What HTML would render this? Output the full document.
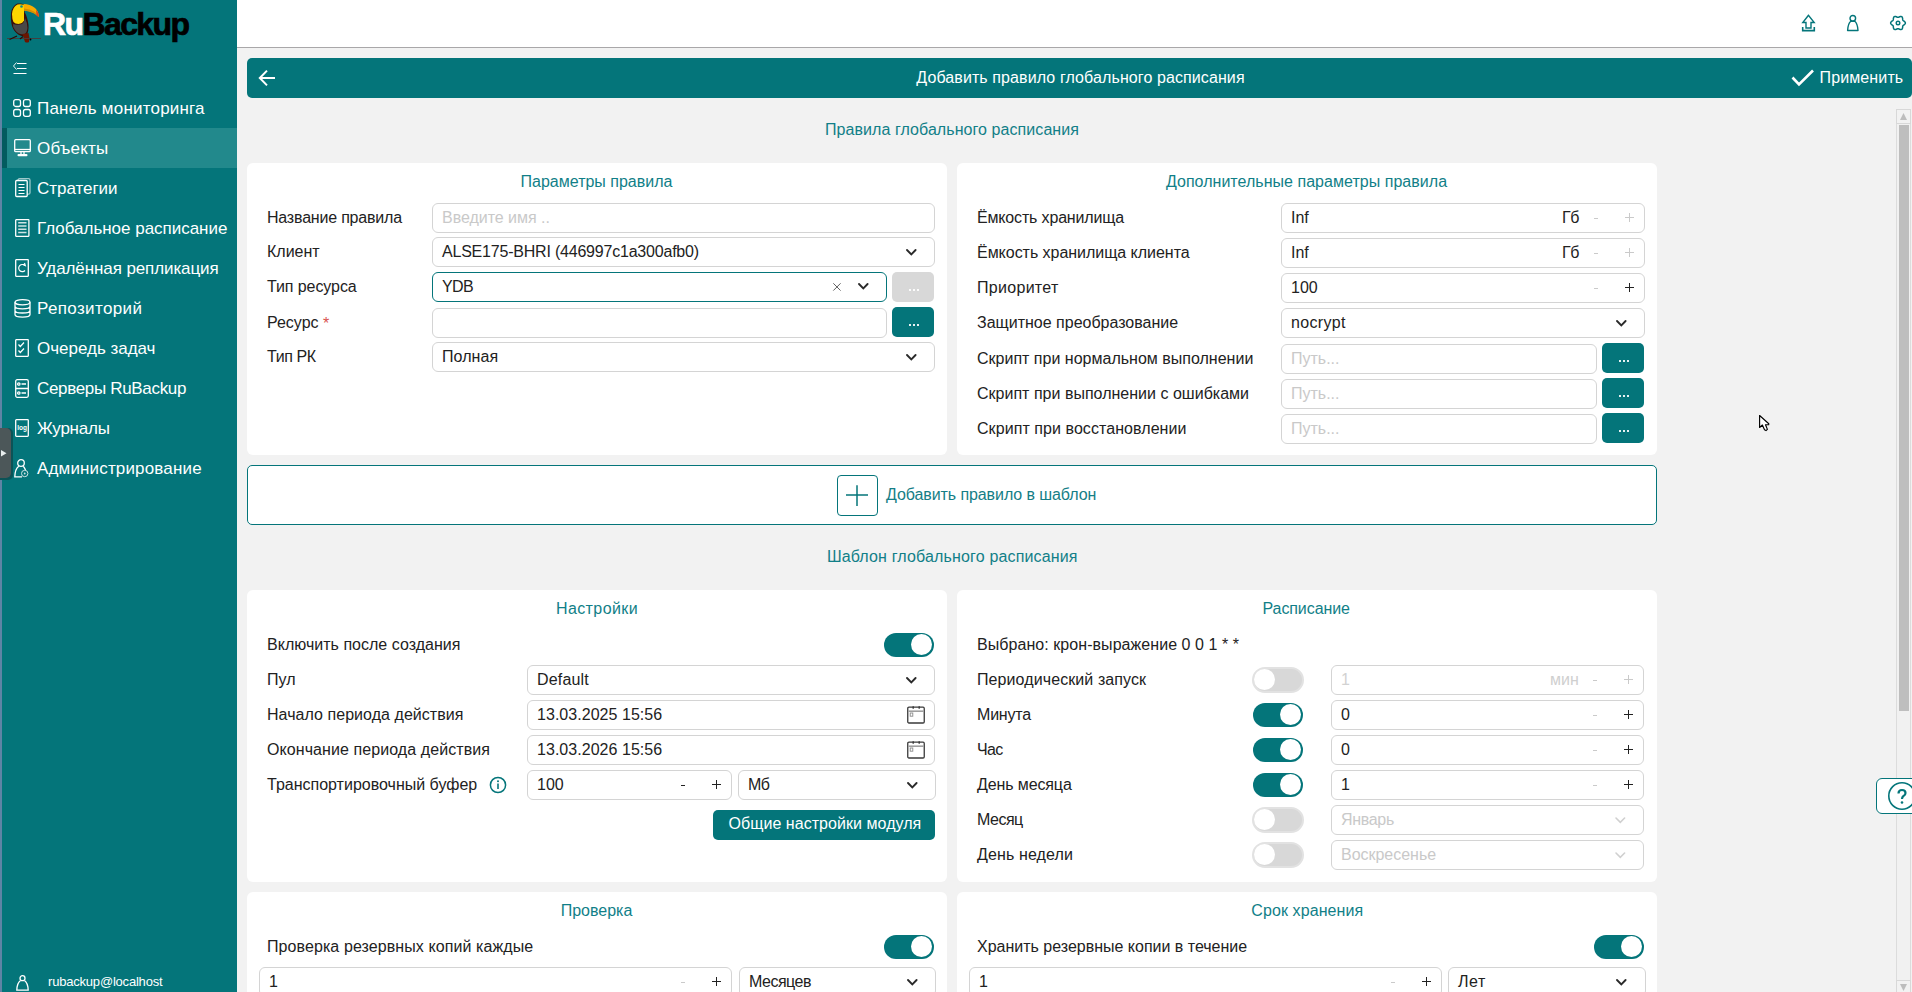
<!DOCTYPE html>
<html><head><meta charset="utf-8">
<style>
*{box-sizing:border-box;margin:0;padding:0}
html,body{width:1912px;height:992px;overflow:hidden;background:#f2f2f2;font-family:"Liberation Sans",sans-serif;color:#222}
.a{position:absolute;display:block}
svg.a{overflow:visible}
.lbl{position:absolute;font-size:16px;color:#222;white-space:nowrap;line-height:20px}
.ttl{position:absolute;font-size:16px;color:#117f88;white-space:nowrap;line-height:20px;text-align:center}
.card{position:absolute;background:#fff;border-radius:6px}
.inp{position:absolute;border:1px solid #d4d4d4;border-radius:6px;background:#fff}
.btn{position:absolute;border-radius:5px;background:#04757a}
.tog{position:absolute;width:50px;height:24px;border-radius:12px;background:#04757a}
.tog::after{content:"";position:absolute;top:1.2px;left:27.2px;width:21px;height:21px;border-radius:11px;background:#fff}
.tog.off{background:#d8d8d8;border:2px solid #e2e2e2;width:52px;height:26px;border-radius:13px}
.tog.off::after{left:0.4px;top:0px;width:21px;height:21px;border-radius:11px}
</style></head><body>
<div class="a" style="left:0;top:0;width:2px;height:992px;background:#5f84a5"></div>
<div class="a" style="left:2px;top:0;width:235px;height:992px;background:#04757a"></div>
<div class="a" style="left:237px;top:0;width:1675px;height:47px;background:#fff"></div>
<div class="a" style="left:237px;top:47px;width:1675px;height:1px;background:#a9a7a9"></div>
<svg class="a" style="left:0px;top:0px" width="44" height="46" viewBox="0 0 44 46">
<path d="M17.5 3.5 Q12 6 11 13 Q10.5 21 12 26 Q14 32 19 35 Q23 37 26 36 Q29 32 28.5 25 Q27.5 17 24.5 12 L24 4.5 Q21 3 17.5 3.5 Z" fill="#3a0d08"/>
<path d="M17.5 4.5 Q12.5 7 12 14 Q12 19 13.5 22 Q15 24 18.5 24 Q22.5 23.5 24 20.5 L24 5 Q21 3.8 17.5 4.5 Z" fill="#fed600"/>
<path d="M13 24 Q17 25.5 22 24 Q24.5 22 25 18 Q27.5 23 27.5 28 Q27 33 24 34.5 Q18 34.5 15 30 Q12.5 27 13 24 Z" fill="#484848"/>
<path d="M23.5 4 Q30 4.2 35 8 Q38.5 11 39 17 Q37 14.5 33.5 12.8 Q29 10.8 24 10.5 Z" fill="#f7ab00"/>
<path d="M24 8.5 Q30 9 34 11.5 Q36.5 13 38 15.5 L38.5 17 Q36 14.5 33 13 Q29 11 24 10.5 Z" fill="#d58f00"/>
<path d="M36 9.5 Q38.7 12 39 17 L36.5 15.5 Z" fill="#e0401c"/>
<path d="M22.5 34 Q24 39 25 42 Q27 43 29 42 Q30 38 28.5 33 Z" fill="#6b1500"/>
<circle cx="21.5" cy="6.5" r="1.3" fill="#0f8a8a"/>
<path d="M7 38.5 H41" stroke="#4a3a3a" stroke-width="0.9"/>
<path d="M9.5 39.5 L17 36 M20 39 L23 36.5" stroke="#2a0a05" stroke-width="1.2"/>
<circle cx="30.5" cy="39.5" r="0.9" fill="#000"/>
</svg>
<div class="a" style="left:43px;top:4px;font-size:32px;font-weight:bold;letter-spacing:-1.6px;-webkit-text-stroke:0.7px;line-height:40px;white-space:nowrap"><span style="color:#fff;-webkit-text-stroke-color:#fff">Ru</span><span style="color:#000;-webkit-text-stroke-color:#000">Backup</span></div>
<svg class="a" style="left:12px;top:61px" width="16" height="15" viewBox="0 0 16 15">
<path d="M4.5 1.5 L1.5 5 L4.5 8.5" fill="none" stroke="#fff" stroke-width="0.9"/>
<path d="M5 2.5 H14.5 M5 7.5 H14.5 M1.5 12.5 H14.5" stroke="#fff" stroke-width="1"/>
</svg>
<div class="a" style="left:37px;top:89px;height:40px;line-height:40px;font-size:17px;letter-spacing:0.2px;color:#fff;white-space:nowrap">Панель мониторинга</div>
<div class="a" style="left:2px;top:128px;width:235px;height:40px;background:#22898c"></div>
<div class="a" style="left:2px;top:128px;width:5px;height:40px;background:#035b5f"></div>
<div class="a" style="left:37px;top:129px;height:40px;line-height:40px;font-size:17px;letter-spacing:0.167px;color:#fff;white-space:nowrap">Объекты</div>
<div class="a" style="left:37px;top:169px;height:40px;line-height:40px;font-size:17px;letter-spacing:-0.038px;color:#fff;white-space:nowrap">Стратегии</div>
<div class="a" style="left:37px;top:209px;height:40px;line-height:40px;font-size:17px;letter-spacing:-0.02px;color:#fff;white-space:nowrap">Глобальное расписание</div>
<div class="a" style="left:37px;top:249px;height:40px;line-height:40px;font-size:17px;letter-spacing:-0.1px;color:#fff;white-space:nowrap">Удалённая репликация</div>
<div class="a" style="left:37px;top:289px;height:40px;line-height:40px;font-size:17px;letter-spacing:0.36px;color:#fff;white-space:nowrap">Репозиторий</div>
<div class="a" style="left:37px;top:329px;height:40px;line-height:40px;font-size:17px;letter-spacing:-0.017px;color:#fff;white-space:nowrap">Очередь задач</div>
<div class="a" style="left:37px;top:369px;height:40px;line-height:40px;font-size:17px;letter-spacing:-0.327px;color:#fff;white-space:nowrap">Серверы RuBackup</div>
<div class="a" style="left:37px;top:409px;height:40px;line-height:40px;font-size:17px;letter-spacing:-0.217px;color:#fff;white-space:nowrap">Журналы</div>
<div class="a" style="left:37px;top:449px;height:40px;line-height:40px;font-size:17px;letter-spacing:0.156px;color:#fff;white-space:nowrap">Администрирование</div>
<svg class="a" style="left:13px;top:99px" width="18" height="18" viewBox="0 0 18 18"><rect x="0.7" y="0.7" width="6.8" height="6.8" rx="2" fill="none" stroke="#fff" stroke-width="1.3"/><rect x="10.5" y="0.7" width="6.8" height="6.8" rx="2" fill="none" stroke="#fff" stroke-width="1.3"/><rect x="0.7" y="10.5" width="6.8" height="6.8" rx="2" fill="none" stroke="#fff" stroke-width="1.3"/><rect x="10.5" y="10.5" width="6.8" height="6.8" rx="2" fill="none" stroke="#fff" stroke-width="1.3"/></svg>
<svg class="a" style="left:13.5px;top:138.5px" width="17" height="18" viewBox="0 0 17 18"><rect x="0.7" y="0.7" width="15.6" height="12" rx="1" fill="none" stroke="#fff" stroke-width="1.3"/><path d="M0.7 10.5 H16.3" fill="none" stroke="#fff" stroke-width="1.3"/><path d="M7 12.7 V15 M10 12.7 V15" fill="none" stroke="#fff" stroke-width="1.3"/><rect x="3.5" y="15" width="10" height="2.2" rx="1" fill="#fff"/></svg>
<svg class="a" style="left:14.5px;top:178px" width="16" height="19" viewBox="0 0 16 19"><rect x="3" y="0.7" width="12" height="15.5" rx="1.5" fill="none" stroke="#9cc8ca" stroke-width="1.3"/><rect x="0.7" y="2.5" width="11.5" height="16" rx="1" fill="#04757a" stroke="#fff" stroke-width="1.3"/><path d="M3.5 6.5 H9.5 M3.5 9.5 H9.5 M3.5 12.5 H9.5 M3.5 15.5 H9.5" stroke="#fff" stroke-width="1.2"/></svg>
<svg class="a" style="left:14.5px;top:219px" width="15" height="18" viewBox="0 0 15 18"><rect x="0.7" y="0.7" width="13.2" height="16.6" rx="0.5" fill="none" stroke="#fff" stroke-width="1.3"/><path d="M3.2 3.8 H11.5 M3.2 7 H11.5 M3.2 10.2 H11.5 M3.2 13.4 H11.5" stroke="#cfe3e4" stroke-width="1.5"/></svg>
<svg class="a" style="left:15px;top:259px" width="14" height="18" viewBox="0 0 14 18"><rect x="0.7" y="0.7" width="12.6" height="16.6" rx="0.5" fill="none" stroke="#fff" stroke-width="1.3"/><path d="M9.8 6.5 A3.6 3.6 0 1 0 10 11.5" fill="none" stroke="#fff" stroke-width="1.2"/><path d="M8 5.2 L10.3 6.6 L9.5 4" fill="none" stroke="#fff" stroke-width="1.1"/></svg>
<svg class="a" style="left:14px;top:298.5px" width="17" height="19" viewBox="0 0 17 19"><ellipse cx="8.5" cy="3.2" rx="7.5" ry="2.6" fill="none" stroke="#fff" stroke-width="1.3"/><path d="M1 3.2 V15.5 A7.5 2.6 0 0 0 16 15.5 V3.2 M1 7.3 A7.5 2.6 0 0 0 16 7.3 M1 11.4 A7.5 2.6 0 0 0 16 11.4" fill="none" stroke="#fff" stroke-width="1.3"/></svg>
<svg class="a" style="left:15px;top:339px" width="14" height="18" viewBox="0 0 14 18"><rect x="0.7" y="0.7" width="12.6" height="16.6" rx="0.5" fill="none" stroke="#fff" stroke-width="1.3"/><path d="M3.5 5.5 L5.3 7.5 L9 3.5 M3.5 11.5 L5.3 13.5 L9 9.5" fill="none" stroke="#fff" stroke-width="1.2"/></svg>
<svg class="a" style="left:15px;top:378.5px" width="14" height="19" viewBox="0 0 14 19"><rect x="0.7" y="0.7" width="12.6" height="17.6" rx="1.5" fill="none" stroke="#fff" stroke-width="1.3"/><path d="M0.7 9.5 H13.3 M6.5 5 H11 M6.5 14 H11" fill="none" stroke="#fff" stroke-width="1.3"/><circle cx="3.8" cy="5" r="1.2" fill="none" stroke="#fff" stroke-width="1.3"/><circle cx="3.8" cy="14" r="1.2" fill="none" stroke="#fff" stroke-width="1.3"/></svg>
<svg class="a" style="left:15px;top:419px" width="14" height="18" viewBox="0 0 14 18"><rect x="0.7" y="0.7" width="12.6" height="16.6" rx="0.8" fill="none" stroke="#fff" stroke-width="1.3"/><text x="7" y="10.5" font-size="6.5" font-family="Liberation Sans" font-weight="bold" fill="#fff" text-anchor="middle">log</text></svg>
<svg class="a" style="left:14px;top:458.5px" width="15" height="19" viewBox="0 0 15 19"><circle cx="7" cy="4" r="3.3" fill="none" stroke="#fff" stroke-width="1.3"/><path d="M4.8 7.2 Q1 10 0.8 17.8 H8" fill="none" stroke="#fff" stroke-width="1.3"/><path d="M9.3 7.2 Q10.5 8.5 11.5 11" fill="none" stroke="#fff" stroke-width="1.3"/><circle cx="10.7" cy="14.5" r="3.2" fill="none" stroke="#cfe3e4" stroke-width="1"/><circle cx="10.7" cy="14.5" r="0.9" fill="#cfe3e4"/></svg>
<div class="a" style="left:0;top:428px;width:13px;height:52px;border-radius:0 5px 5px 0;background:#0b5357"></div>
<div class="a" style="left:0;top:428px;width:11px;height:50px;border-radius:0 5px 5px 0;background:#4c5759"></div>
<svg class="a" style="left:1px;top:450px" width="6" height="7"><path d="M0 0 L5.5 3.3 L0 6.6 Z" fill="#e8eeee"/></svg>
<svg class="a" style="left:16px;top:975px" width="13" height="16" viewBox="0 0 13 16"><circle cx="6.5" cy="3.2" r="2.5" fill="none" stroke="#fff" stroke-width="1.3"/><path d="M4.5 5.5 Q1 8 0.8 15.2 H12.2 Q12 8 8.5 5.5" fill="none" stroke="#fff" stroke-width="1.3"/></svg>
<div class="a" style="left:48px;top:973px;font-size:13px;line-height:18px;color:#fff;white-space:nowrap;letter-spacing:-0.2px">rubackup@localhost</div>
<svg class="a" style="left:1801px;top:14px" width="15" height="18" viewBox="0 0 15 18">
<path d="M7.5 1.3 L1.8 8.5 H5 V14 H10 V8.5 H13.2 Z" fill="none" stroke="#04757a" stroke-width="1.4" stroke-linejoin="miter"/>
<path d="M1.7 13 V16.6 H13.3 V13" fill="none" stroke="#04757a" stroke-width="1.6"/>
</svg>
<svg class="a" style="left:1846px;top:14px" width="14" height="18" viewBox="0 0 14 18">
<circle cx="6.8" cy="4.3" r="2.8" fill="none" stroke="#04757a" stroke-width="1.4"/>
<path d="M4.8 7.3 Q2 9.5 1.6 16.5 H12 Q11.6 9.5 8.8 7.3 Z" fill="none" stroke="#04757a" stroke-width="1.4" stroke-linejoin="round"/>
</svg>
<svg class="a" style="left:1889px;top:13.7px" width="18" height="18" viewBox="0 0 18 18">
<path d="M16.35 9.00 L16.21 9.63 L15.82 10.20 L15.28 10.68 L14.71 11.08 L14.22 11.44 L13.89 11.82 L13.72 12.31 L13.65 12.90 L13.60 13.60 L13.45 14.30 L13.15 14.93 L12.68 15.37 L12.06 15.56 L11.37 15.51 L10.68 15.28 L10.05 14.98 L9.50 14.74 L9.00 14.65 L8.50 14.74 L7.95 14.98 L7.32 15.28 L6.63 15.51 L5.94 15.56 L5.33 15.37 L4.85 14.93 L4.55 14.30 L4.40 13.60 L4.35 12.90 L4.28 12.31 L4.11 11.83 L3.78 11.44 L3.29 11.08 L2.72 10.68 L2.18 10.20 L1.79 9.63 L1.65 9.00 L1.79 8.37 L2.18 7.80 L2.72 7.32 L3.29 6.92 L3.78 6.56 L4.11 6.17 L4.28 5.69 L4.35 5.10 L4.40 4.40 L4.55 3.70 L4.85 3.07 L5.32 2.63 L5.94 2.44 L6.63 2.49 L7.32 2.72 L7.95 3.02 L8.50 3.26 L9.00 3.35 L9.50 3.26 L10.05 3.02 L10.68 2.72 L11.37 2.49 L12.06 2.44 L12.67 2.63 L13.15 3.07 L13.45 3.70 L13.60 4.40 L13.65 5.10 L13.72 5.69 L13.89 6.18 L14.22 6.56 L14.71 6.92 L15.28 7.32 L15.82 7.80 L16.21 8.37 Z" fill="none" stroke="#04757a" stroke-width="1.5" stroke-linejoin="round"/>
<circle cx="9" cy="9" r="1.8" fill="none" stroke="#04757a" stroke-width="1.4"/>
</svg>
<div class="a" style="left:247px;top:58px;width:1665px;height:40px;border-radius:5px;background:#04757a"></div>
<svg class="a" style="left:258px;top:69px" width="19" height="18" viewBox="0 0 19 18"><path d="M17 9 H3 M9 1.6 L1.8 9 L9 16.4" fill="none" stroke="#fff" stroke-width="2"/></svg>
<div class="lbl" style="left:880.5px;top:68px;width:400px;text-align:center;color:#fff;letter-spacing:0.1px">Добавить правило глобального расписания</div>
<svg class="a" style="left:1790px;top:68px" width="26" height="20" viewBox="0 0 26 20"><path d="M2.5 9.5 L9 16.5 L23 2.5" fill="none" stroke="#fff" stroke-width="2.6"/></svg>
<div class="lbl" style="left:1819.5px;top:68.00px;color:#fff;letter-spacing:0.125px;">Применить</div>
<div class="ttl" style="left:752.0px;top:120.00px;width:400px;letter-spacing:0.069px;">Правила глобального расписания</div>
<div class="ttl" style="left:752.3px;top:547.00px;width:400px;letter-spacing:0.157px;">Шаблон глобального расписания</div>
<div class="card" style="left:247px;top:163px;width:700px;height:292px"></div>
<div class="card" style="left:957px;top:163px;width:700px;height:292px"></div>
<div class="card" style="left:247px;top:590px;width:700px;height:292px"></div>
<div class="card" style="left:957px;top:590px;width:700px;height:292px"></div>
<div class="card" style="left:247px;top:892px;width:700px;height:200px"></div>
<div class="card" style="left:957px;top:892px;width:700px;height:200px"></div>
<div class="ttl" style="left:396.5px;top:172.00px;width:400px;">Параметры правила</div>
<div class="ttl" style="left:1106.5px;top:172.00px;width:400px;letter-spacing:0.032px;">Дополнительные параметры правила</div>
<div class="ttl" style="left:397.0px;top:599.00px;width:400px;letter-spacing:0.401px;">Настройки</div>
<div class="ttl" style="left:1106.2px;top:599.00px;width:400px;letter-spacing:-0.088px;">Расписание</div>
<div class="ttl" style="left:396.5px;top:901.00px;width:400px;">Проверка</div>
<div class="ttl" style="left:1107.3px;top:901.00px;width:400px;letter-spacing:0.1px;">Срок хранения</div>
<div class="lbl" style="left:267px;top:208.00px;letter-spacing:-0.2px;">Название правила</div>
<div class="inp" style="left:432px;top:203px;width:503px;height:30px;"></div>
<div class="lbl" style="left:442px;top:208.00px;color:#c9c9c9;letter-spacing:-0.03px;">Введите имя ..</div>
<div class="lbl" style="left:267px;top:242.00px;">Клиент</div>
<div class="inp" style="left:432px;top:237px;width:503px;height:30px;"></div>
<div class="lbl" style="left:442px;top:242.00px;color:#222;letter-spacing:-0.207px;">ALSE175-BHRI (446997c1a300afb0)</div>
<svg class="a" style="left:905.30px;top:247.70px" width="12.6" height="8.3"><path d="M2 2 L6.30 6.30 L10.60 2" fill="none" stroke="#2a2a2a" stroke-width="1.9" stroke-linecap="round" stroke-linejoin="miter"/></svg>
<div class="lbl" style="left:267px;top:277.00px;letter-spacing:-0.08px;">Тип ресурса</div>
<div class="inp" style="left:432px;top:272px;width:455px;height:30px;border-color:#04757a;"></div>
<div class="lbl" style="left:442px;top:277.00px;color:#222;letter-spacing:-0.6px;">YDB</div>
<svg class="a" style="left:832px;top:282px" width="10" height="10" viewBox="0 0 10 10"><path d="M1.3 1.3 L8.6 8.6 M8.6 1.3 L1.3 8.6" stroke="#5a5a5a" stroke-width="0.95"/></svg>
<svg class="a" style="left:857.20px;top:282.45px" width="12.6" height="8.3"><path d="M2 2 L6.30 6.30 L10.60 2" fill="none" stroke="#2a2a2a" stroke-width="1.9" stroke-linecap="round" stroke-linejoin="miter"/></svg>
<div class="btn" style="left:892px;top:272px;width:42px;height:30px;background:#d8d8d8"></div>
<div class="a" style="left:909px;top:289px;width:2px;height:2px;background:#fff;opacity:0.9"></div>
<div class="a" style="left:913px;top:289px;width:2px;height:2px;background:#fff;opacity:0.9"></div>
<div class="a" style="left:917px;top:289px;width:2px;height:2px;background:#fff;opacity:0.9"></div>
<div class="lbl" style="left:267px;top:313.00px;">Ресурс <span style="color:#d9534f;position:relative;top:1px">*</span></div>
<div class="inp" style="left:432px;top:308px;width:455px;height:30px;"></div>
<div class="btn" style="left:892px;top:307px;width:42px;height:30px;background:#04757a"></div>
<div class="a" style="left:909px;top:324px;width:2px;height:2px;background:#fff;opacity:0.9"></div>
<div class="a" style="left:913px;top:324px;width:2px;height:2px;background:#fff;opacity:0.9"></div>
<div class="a" style="left:917px;top:324px;width:2px;height:2px;background:#fff;opacity:0.9"></div>
<div class="lbl" style="left:267px;top:347.00px;letter-spacing:-0.4px;">Тип РК</div>
<div class="inp" style="left:432px;top:342px;width:503px;height:30px;"></div>
<div class="lbl" style="left:442px;top:347.00px;color:#222;letter-spacing:0.08px;">Полная</div>
<svg class="a" style="left:905.30px;top:352.70px" width="12.6" height="8.3"><path d="M2 2 L6.30 6.30 L10.60 2" fill="none" stroke="#2a2a2a" stroke-width="1.9" stroke-linecap="round" stroke-linejoin="miter"/></svg>
<div class="lbl" style="left:977px;top:208.00px;letter-spacing:-0.163px;">Ёмкость хранилища</div>
<div class="lbl" style="left:977px;top:243.00px;letter-spacing:-0.033px;">Ёмкость хранилища клиента</div>
<div class="lbl" style="left:977px;top:278.00px;letter-spacing:0.3px;">Приоритет</div>
<div class="lbl" style="left:977px;top:313.00px;">Защитное преобразование</div>
<div class="lbl" style="left:977px;top:349.00px;letter-spacing:0.006px;">Скрипт при нормальном выполнении</div>
<div class="lbl" style="left:977px;top:384.00px;letter-spacing:0.012px;">Скрипт при выполнении с ошибками</div>
<div class="lbl" style="left:977px;top:419.00px;letter-spacing:0.066px;">Скрипт при восстановлении</div>
<div class="inp" style="left:1281px;top:203px;width:364px;height:30px;"></div>
<div class="lbl" style="left:1291px;top:208.00px;color:#222;">Inf</div>
<div class="lbl" style="left:1562px;top:208.00px;color:#222;letter-spacing:-0.3px;">Гб</div>
<div class="a" style="left:1594px;top:218px;width:4px;height:1px;background:#cacaca"></div>
<div class="a" style="left:1625px;top:217px;width:9px;height:1px;background:#cacaca"></div>
<div class="a" style="left:1629px;top:213px;width:1px;height:9px;background:#cacaca"></div>
<div class="inp" style="left:1281px;top:238px;width:364px;height:30px;"></div>
<div class="lbl" style="left:1291px;top:243.00px;color:#222;">Inf</div>
<div class="lbl" style="left:1562px;top:243.00px;color:#222;letter-spacing:-0.3px;">Гб</div>
<div class="a" style="left:1594px;top:253px;width:4px;height:1px;background:#cacaca"></div>
<div class="a" style="left:1625px;top:252px;width:9px;height:1px;background:#cacaca"></div>
<div class="a" style="left:1629px;top:248px;width:1px;height:9px;background:#cacaca"></div>
<div class="inp" style="left:1281px;top:273px;width:364px;height:30px;"></div>
<div class="lbl" style="left:1291px;top:278.00px;color:#222;">100</div>
<div class="a" style="left:1594px;top:288px;width:4px;height:1px;background:#cacaca"></div>
<div class="a" style="left:1625px;top:287px;width:9px;height:1px;background:#222"></div>
<div class="a" style="left:1629px;top:283px;width:1px;height:9px;background:#222"></div>
<div class="inp" style="left:1281px;top:308px;width:364px;height:30px;"></div>
<div class="lbl" style="left:1291px;top:313.00px;color:#222;letter-spacing:0.333px;">nocrypt</div>
<svg class="a" style="left:1614.90px;top:318.70px" width="12.6" height="8.3"><path d="M2 2 L6.30 6.30 L10.60 2" fill="none" stroke="#2a2a2a" stroke-width="1.9" stroke-linecap="round" stroke-linejoin="miter"/></svg>
<div class="inp" style="left:1281px;top:344px;width:316px;height:30px;"></div>
<div class="lbl" style="left:1291px;top:349.00px;color:#c9c9c9;">Путь...</div>
<div class="btn" style="left:1602px;top:343px;width:42px;height:30px;background:#04757a"></div>
<div class="a" style="left:1619px;top:360px;width:2px;height:2px;background:#fff;opacity:0.9"></div>
<div class="a" style="left:1623px;top:360px;width:2px;height:2px;background:#fff;opacity:0.9"></div>
<div class="a" style="left:1627px;top:360px;width:2px;height:2px;background:#fff;opacity:0.9"></div>
<div class="inp" style="left:1281px;top:379px;width:316px;height:30px;"></div>
<div class="lbl" style="left:1291px;top:384.00px;color:#c9c9c9;">Путь...</div>
<div class="btn" style="left:1602px;top:378px;width:42px;height:30px;background:#04757a"></div>
<div class="a" style="left:1619px;top:395px;width:2px;height:2px;background:#fff;opacity:0.9"></div>
<div class="a" style="left:1623px;top:395px;width:2px;height:2px;background:#fff;opacity:0.9"></div>
<div class="a" style="left:1627px;top:395px;width:2px;height:2px;background:#fff;opacity:0.9"></div>
<div class="inp" style="left:1281px;top:414px;width:316px;height:30px;"></div>
<div class="lbl" style="left:1291px;top:419.00px;color:#c9c9c9;">Путь...</div>
<div class="btn" style="left:1602px;top:413px;width:42px;height:30px;background:#04757a"></div>
<div class="a" style="left:1619px;top:430px;width:2px;height:2px;background:#fff;opacity:0.9"></div>
<div class="a" style="left:1623px;top:430px;width:2px;height:2px;background:#fff;opacity:0.9"></div>
<div class="a" style="left:1627px;top:430px;width:2px;height:2px;background:#fff;opacity:0.9"></div>
<div class="a" style="left:247px;top:465px;width:1410px;height:60px;border:1.5px solid #04757a;border-radius:5px;background:#fff"></div>
<div class="a" style="left:836.5px;top:475px;width:41px;height:41px;border:1.5px solid #04757a;border-radius:4px"></div>
<svg class="a" style="left:845px;top:483px" width="24" height="24" viewBox="0 0 24 24"><path d="M12 2.2 V23 M1 12 H23" stroke="#04757a" stroke-width="1.5"/></svg>
<div class="lbl" style="left:886px;top:485.00px;color:#157e86;letter-spacing:-0.083px;">Добавить правило в шаблон</div>
<div class="lbl" style="left:267px;top:635.00px;letter-spacing:0.018px;">Включить после создания</div>
<div class="tog" style="left:884px;top:633px"></div>
<div class="lbl" style="left:267px;top:670.00px;letter-spacing:0.1px;">Пул</div>
<div class="inp" style="left:527px;top:665px;width:408px;height:30px;"></div>
<div class="lbl" style="left:537px;top:670.00px;color:#222;letter-spacing:0.167px;">Default</div>
<svg class="a" style="left:905.30px;top:675.70px" width="12.6" height="8.3"><path d="M2 2 L6.30 6.30 L10.60 2" fill="none" stroke="#2a2a2a" stroke-width="1.9" stroke-linecap="round" stroke-linejoin="miter"/></svg>
<div class="lbl" style="left:267px;top:705.00px;letter-spacing:0.046px;">Начало периода действия</div>
<div class="inp" style="left:527px;top:700px;width:408px;height:30px;"></div>
<div class="lbl" style="left:537px;top:705.00px;color:#222;letter-spacing:0.04px;">13.03.2025 15:56</div>
<svg class="a" style="left:907px;top:706px" width="18" height="18" viewBox="0 0 18 18"><rect x="0.75" y="1.2" width="16.5" height="15.8" rx="1.2" fill="none" stroke="#3a3a3a" stroke-width="1.3"/><path d="M1.3 5.2 H16.7" stroke="#a0a0a0" stroke-width="1.6"/><path d="M6.2 0.2 V2.8 M12.2 0.2 V2.8" stroke="#333" stroke-width="1.3"/><rect x="3.2" y="7" width="2.6" height="3.2" fill="none" stroke="#8a8a8a" stroke-width="0.9"/></svg>
<div class="lbl" style="left:267px;top:740.00px;letter-spacing:0.08px;">Окончание периода действия</div>
<div class="inp" style="left:527px;top:735px;width:408px;height:30px;"></div>
<div class="lbl" style="left:537px;top:740.00px;color:#222;letter-spacing:0.04px;">13.03.2026 15:56</div>
<svg class="a" style="left:907px;top:741px" width="18" height="18" viewBox="0 0 18 18"><rect x="0.75" y="1.2" width="16.5" height="15.8" rx="1.2" fill="none" stroke="#3a3a3a" stroke-width="1.3"/><path d="M1.3 5.2 H16.7" stroke="#a0a0a0" stroke-width="1.6"/><path d="M6.2 0.2 V2.8 M12.2 0.2 V2.8" stroke="#333" stroke-width="1.3"/><rect x="3.2" y="7" width="2.6" height="3.2" fill="none" stroke="#8a8a8a" stroke-width="0.9"/></svg>
<div class="lbl" style="left:267px;top:775.00px;">Транспортировочный буфер</div>
<svg class="a" style="left:489px;top:776px" width="18" height="18" viewBox="0 0 18 18"><circle cx="9" cy="9" r="7.6" fill="none" stroke="#04757a" stroke-width="1.5"/><circle cx="9" cy="5.3" r="1" fill="#04757a"/><path d="M9 7.5 V13" stroke="#04757a" stroke-width="1.6"/></svg>
<div class="inp" style="left:527px;top:770px;width:205px;height:30px;"></div>
<div class="lbl" style="left:537px;top:775.00px;color:#222;">100</div>
<div class="a" style="left:681px;top:785px;width:4px;height:1px;background:#222"></div>
<div class="a" style="left:712px;top:784px;width:9px;height:1px;background:#222"></div>
<div class="a" style="left:716px;top:780px;width:1px;height:9px;background:#222"></div>
<div class="inp" style="left:738px;top:770px;width:198px;height:30px;"></div>
<div class="lbl" style="left:748px;top:775.00px;color:#222;letter-spacing:-0.6px;">Мб</div>
<svg class="a" style="left:905.90px;top:780.70px" width="12.6" height="8.3"><path d="M2 2 L6.30 6.30 L10.60 2" fill="none" stroke="#2a2a2a" stroke-width="1.9" stroke-linecap="round" stroke-linejoin="miter"/></svg>
<div class="btn" style="left:713px;top:810px;width:222px;height:30px"></div>
<div class="lbl" style="left:728.5px;top:814.00px;color:#fff;letter-spacing:0.048px;">Общие настройки модуля</div>
<div class="lbl" style="left:977px;top:635.00px;letter-spacing:0.057px;">Выбрано: крон-выражение 0 0 1 * *</div>
<div class="lbl" style="left:977px;top:670.00px;letter-spacing:0.094px;">Периодический запуск</div>
<div class="tog off" style="left:1252px;top:667px"></div>
<div class="inp" style="left:1331px;top:665px;width:313px;height:30px;"></div>
<div class="lbl" style="left:977px;top:705.00px;letter-spacing:-0.2px;">Минута</div>
<div class="tog" style="left:1253px;top:703px"></div>
<div class="inp" style="left:1331px;top:700px;width:313px;height:30px;"></div>
<div class="lbl" style="left:977px;top:740.00px;letter-spacing:-0.6px;">Час</div>
<div class="tog" style="left:1253px;top:738px"></div>
<div class="inp" style="left:1331px;top:735px;width:313px;height:30px;"></div>
<div class="lbl" style="left:977px;top:775.00px;letter-spacing:-0.12px;">День месяца</div>
<div class="tog" style="left:1253px;top:773px"></div>
<div class="inp" style="left:1331px;top:770px;width:313px;height:30px;"></div>
<div class="lbl" style="left:977px;top:810.00px;letter-spacing:-0.5px;">Месяц</div>
<div class="tog off" style="left:1252px;top:807px"></div>
<div class="inp" style="left:1331px;top:805px;width:313px;height:30px;"></div>
<div class="lbl" style="left:977px;top:845.00px;letter-spacing:0.12px;">День недели</div>
<div class="tog off" style="left:1252px;top:842px"></div>
<div class="inp" style="left:1331px;top:840px;width:313px;height:30px;"></div>
<div class="lbl" style="left:1341px;top:670.00px;color:#d2d2d2;">1</div>
<div class="lbl" style="left:1550px;top:670.00px;color:#cfcfcf;">мин</div>
<div class="a" style="left:1593px;top:680px;width:4px;height:1px;background:#cacaca"></div>
<div class="a" style="left:1624px;top:679px;width:9px;height:1px;background:#cacaca"></div>
<div class="a" style="left:1628px;top:675px;width:1px;height:9px;background:#cacaca"></div>
<div class="lbl" style="left:1341px;top:705.00px;color:#222;">0</div>
<div class="a" style="left:1593px;top:715px;width:4px;height:1px;background:#cacaca"></div>
<div class="a" style="left:1624px;top:714px;width:9px;height:1px;background:#222"></div>
<div class="a" style="left:1628px;top:710px;width:1px;height:9px;background:#222"></div>
<div class="lbl" style="left:1341px;top:740.00px;color:#222;">0</div>
<div class="a" style="left:1593px;top:750px;width:4px;height:1px;background:#cacaca"></div>
<div class="a" style="left:1624px;top:749px;width:9px;height:1px;background:#222"></div>
<div class="a" style="left:1628px;top:745px;width:1px;height:9px;background:#222"></div>
<div class="lbl" style="left:1341px;top:775.00px;color:#222;">1</div>
<div class="a" style="left:1593px;top:785px;width:4px;height:1px;background:#cacaca"></div>
<div class="a" style="left:1624px;top:784px;width:9px;height:1px;background:#222"></div>
<div class="a" style="left:1628px;top:780px;width:1px;height:9px;background:#222"></div>
<div class="lbl" style="left:1341px;top:810.00px;color:#c9c9c9;letter-spacing:-0.32px;">Январь</div>
<svg class="a" style="left:1614.20px;top:815.70px" width="12.6" height="8.3"><path d="M2 2 L6.30 6.30 L10.60 2" fill="none" stroke="#d0d0d0" stroke-width="1.6" stroke-linecap="round" stroke-linejoin="miter"/></svg>
<div class="lbl" style="left:1341px;top:845.00px;color:#c9c9c9;letter-spacing:-0.02px;">Воскресенье</div>
<svg class="a" style="left:1614.20px;top:850.70px" width="12.6" height="8.3"><path d="M2 2 L6.30 6.30 L10.60 2" fill="none" stroke="#d0d0d0" stroke-width="1.6" stroke-linecap="round" stroke-linejoin="miter"/></svg>
<div class="lbl" style="left:267px;top:937.00px;letter-spacing:0.087px;">Проверка резервных копий каждые</div>
<div class="tog" style="left:884px;top:935px"></div>
<div class="inp" style="left:259px;top:967px;width:473px;height:30px;"></div>
<div class="lbl" style="left:269px;top:972.00px;color:#222;">1</div>
<div class="a" style="left:681px;top:982px;width:4px;height:1px;background:#cacaca"></div>
<div class="a" style="left:712px;top:981px;width:9px;height:1px;background:#222"></div>
<div class="a" style="left:716px;top:977px;width:1px;height:9px;background:#222"></div>
<div class="inp" style="left:739px;top:967px;width:197px;height:30px;"></div>
<div class="lbl" style="left:749px;top:972.00px;color:#222;letter-spacing:-0.5px;">Месяцев</div>
<svg class="a" style="left:905.90px;top:977.70px" width="12.6" height="8.3"><path d="M2 2 L6.30 6.30 L10.60 2" fill="none" stroke="#2a2a2a" stroke-width="1.9" stroke-linecap="round" stroke-linejoin="miter"/></svg>
<div class="lbl" style="left:977px;top:937.00px;letter-spacing:-0.006px;">Хранить резервные копии в течение</div>
<div class="tog" style="left:1594px;top:935px"></div>
<div class="inp" style="left:969px;top:967px;width:473px;height:30px;"></div>
<div class="lbl" style="left:979px;top:972.00px;color:#222;">1</div>
<div class="a" style="left:1391px;top:982px;width:4px;height:1px;background:#cacaca"></div>
<div class="a" style="left:1422px;top:981px;width:9px;height:1px;background:#222"></div>
<div class="a" style="left:1426px;top:977px;width:1px;height:9px;background:#222"></div>
<div class="inp" style="left:1448px;top:967px;width:198px;height:30px;"></div>
<div class="lbl" style="left:1458px;top:972.00px;color:#222;letter-spacing:0.6px;">Лет</div>
<svg class="a" style="left:1615.20px;top:977.70px" width="12.6" height="8.3"><path d="M2 2 L6.30 6.30 L10.60 2" fill="none" stroke="#2a2a2a" stroke-width="1.9" stroke-linecap="round" stroke-linejoin="miter"/></svg>
<div class="a" style="left:1896px;top:109px;width:15px;height:883px;background:#f1f1f1;border-left:1px solid #dcdcdc;border-right:1px solid #dcdcdc"></div>
<div class="a" style="left:1896px;top:109px;width:15px;height:15px;border:1px solid #d8d8d8;background:#f2f2f2"></div>
<svg class="a" style="left:1900px;top:113px" width="7" height="7"><path d="M3.5 0 L7 7 H0 Z" fill="#bdbdbd"/></svg>
<div class="a" style="left:1899px;top:125px;width:10px;height:586px;background:#bebebe"></div>
<div class="a" style="left:1896px;top:980px;width:15px;height:14px;border:1px solid #d8d8d8;background:#f2f2f2"></div>
<svg class="a" style="left:1900px;top:984px" width="7" height="7"><path d="M0 0 H7 L3.5 7 Z" fill="#bdbdbd"/></svg>
<div class="a" style="left:1876px;top:778px;width:50px;height:36px;border:1.5px solid #04757a;border-radius:6px;background:#fff"></div>
<svg class="a" style="left:1887px;top:782px" width="28" height="28" viewBox="0 0 28 28"><circle cx="15" cy="14" r="13.2" fill="none" stroke="#04757a" stroke-width="1.6"/><path d="M11.5 11.5 Q11.5 8 15 8 Q18.5 8 18.5 11 Q18.5 13 16.5 14 Q15 15 15 17" fill="none" stroke="#04757a" stroke-width="2.2"/><circle cx="15" cy="20.5" r="1.3" fill="#04757a"/></svg>
<svg class="a" style="left:1756px;top:412px" width="16" height="22" viewBox="0 0 16 22"><path d="M3.6 3.5 V15.5 L6.4 13 L8.5 17.8 L10 18.6 L11.4 17.4 L9.5 12.7 H12.7 L12.8 11.7 Z" fill="#fff" stroke="#000" stroke-width="1.15" stroke-linejoin="round"/></svg>
</body></html>
